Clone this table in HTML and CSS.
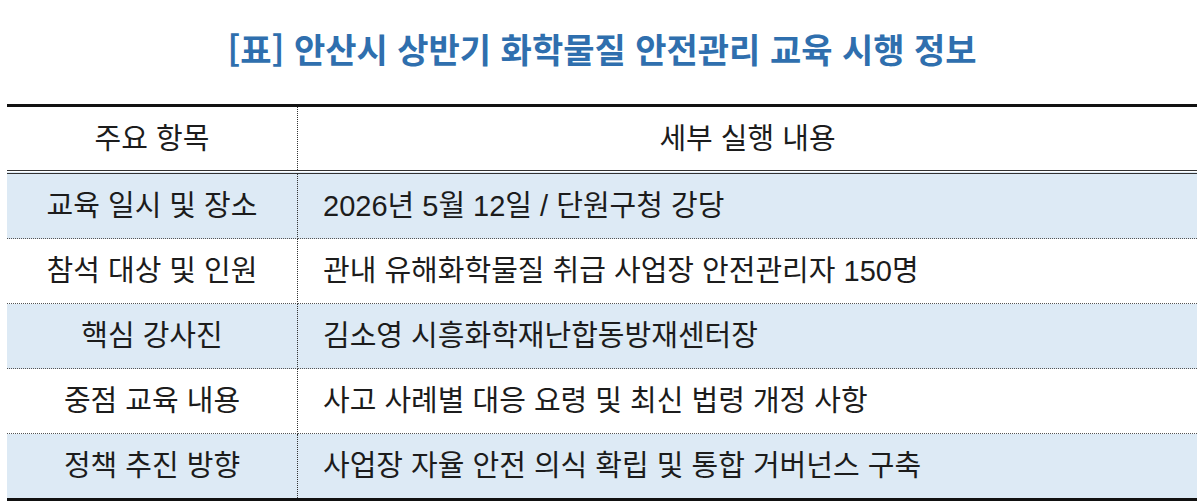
FILE: index.html
```html
<!DOCTYPE html>
<html lang="ko">
<head>
<meta charset="utf-8">
<title>안산시 상반기 화학물질 안전관리 교육 시행 정보</title>
<link rel="stylesheet" href="styles.css">
</head>
<body>
<div class="page">
  <h1 class="title">[표] 안산시 상반기 화학물질 안전관리 교육 시행 정보</h1>
  <table class="info">
    <thead>
      <tr>
        <th class="key">주요 항목</th>
        <th class="val-head">세부 실행 내용</th>
      </tr>
    </thead>
    <tbody>
      <tr class="shade">
        <td class="key">교육 일시 및 장소</td>
        <td class="val">2026년 5월 12일 / 단원구청 강당</td>
      </tr>
      <tr>
        <td class="key">참석 대상 및 인원</td>
        <td class="val">관내 유해화학물질 취급 사업장 안전관리자 150명</td>
      </tr>
      <tr class="shade">
        <td class="key">핵심 강사진</td>
        <td class="val">김소영 시흥화학재난합동방재센터장</td>
      </tr>
      <tr>
        <td class="key">중점 교육 내용</td>
        <td class="val">사고 사례별 대응 요령 및 최신 법령 개정 사항</td>
      </tr>
      <tr class="shade">
        <td class="key">정책 추진 방향</td>
        <td class="val">사업장 자율 안전 의식 확립 및 통합 거버넌스 구축</td>
      </tr>
    </tbody>
  </table>
</div>
</body>
</html>
```

FILE: styles.css
```css
html, body {
  margin: 0;
  padding: 0;
  background: #ffffff;
}

.page {
  padding: 0 3px 0 7px;
  font-family: "Liberation Sans", "Noto Sans CJK KR", sans-serif;
  color: #1c1c1c;
}

.title {
  margin: 0;
  height: 104px;
  box-sizing: border-box;
  padding-top: 26px;
  text-align: center;
  font-family: "Noto Sans CJK KR", sans-serif;
  font-weight: 700;
  font-size: 34px;
  line-height: 46px;
  color: #2f6fae;
  letter-spacing: 0;
}

.info {
  width: 100%;
  border-collapse: collapse;
  border-top: 3px solid #111111;
  border-bottom: 3px solid #111111;
  font-size: 29px;
}

.info th,
.info td {
  padding: 0;
  font-weight: 400;
  height: 64px;
  line-height: 36px;
  vertical-align: middle;
}

.info thead th {
  height: 63px;
  border-bottom: 4px double #333333;
  text-align: center;
}

.info tbody td {
  border-bottom: 1px dotted #555555;
}

.info tbody tr:last-child td {
  border-bottom: none;
}

.info .key {
  width: 290px;
  text-align: center;
  border-right: 1px dotted #333333;
}

.info .val-head {
  text-align: center;
}

.info .val {
  text-align: left;
  padding-left: 25px;
}

.shade td {
  background: #ddeaf5;
}
```
